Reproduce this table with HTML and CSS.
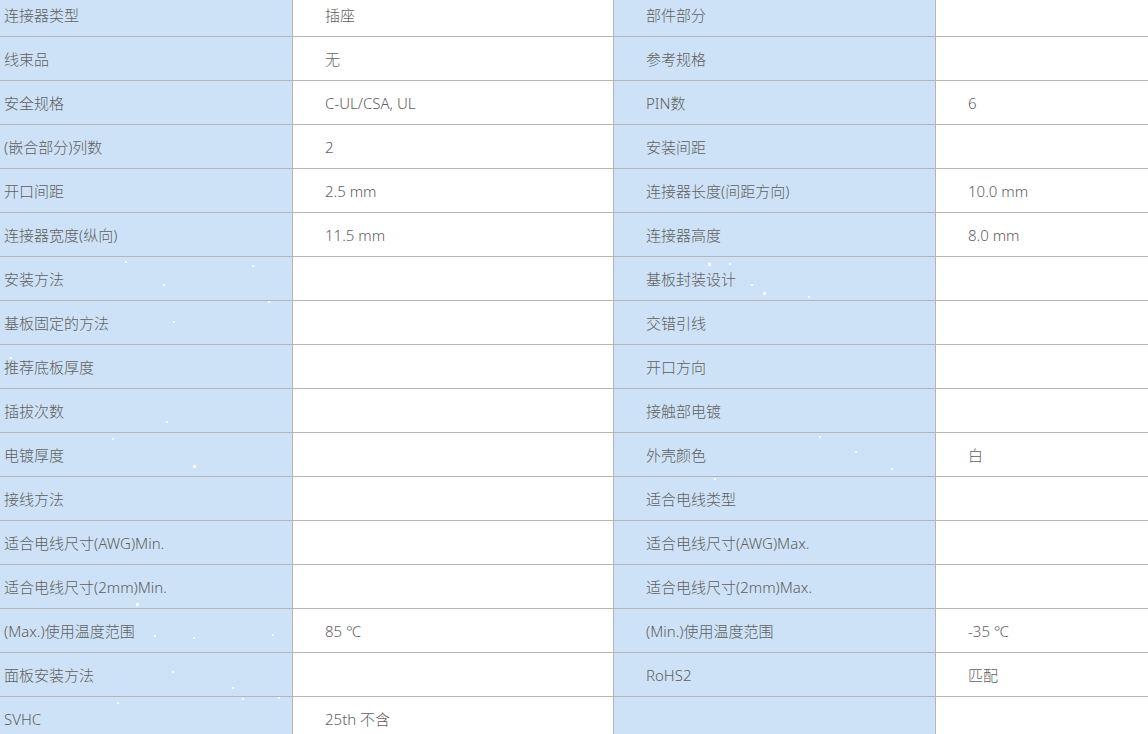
FILE: index.html
```html
<!DOCTYPE html>
<html lang="zh-CN">
<head>
<meta charset="utf-8">
<title>规格</title>
<link rel="stylesheet" href="styles.css">
</head>
<body>
<div class="spec">
  <div class="row"><div class="k">连接器类型</div><div class="v">插座</div><div class="k k2">部件部分</div><div class="v v2"></div></div>
  <div class="row"><div class="k">线束品</div><div class="v">无</div><div class="k k2">参考规格</div><div class="v v2"></div></div>
  <div class="row"><div class="k">安全规格</div><div class="v">C-UL/CSA, UL</div><div class="k k2">PIN数</div><div class="v v2">6</div></div>
  <div class="row"><div class="k">(嵌合部分)列数</div><div class="v">2</div><div class="k k2">安装间距</div><div class="v v2"></div></div>
  <div class="row"><div class="k">开口间距</div><div class="v">2.5 mm</div><div class="k k2">连接器长度(间距方向)</div><div class="v v2">10.0 mm</div></div>
  <div class="row"><div class="k">连接器宽度(纵向)</div><div class="v">11.5 mm</div><div class="k k2">连接器高度</div><div class="v v2">8.0 mm</div></div>
  <div class="row"><div class="k">安装方法</div><div class="v"></div><div class="k k2">基板封装设计</div><div class="v v2"></div></div>
  <div class="row"><div class="k">基板固定的方法</div><div class="v"></div><div class="k k2">交错引线</div><div class="v v2"></div></div>
  <div class="row"><div class="k">推荐底板厚度</div><div class="v"></div><div class="k k2">开口方向</div><div class="v v2"></div></div>
  <div class="row"><div class="k">插拔次数</div><div class="v"></div><div class="k k2">接触部电镀</div><div class="v v2"></div></div>
  <div class="row"><div class="k">电镀厚度</div><div class="v"></div><div class="k k2">外壳颜色</div><div class="v v2">白</div></div>
  <div class="row"><div class="k">接线方法</div><div class="v"></div><div class="k k2">适合电线类型</div><div class="v v2"></div></div>
  <div class="row"><div class="k">适合电线尺寸(AWG)Min.</div><div class="v"></div><div class="k k2">适合电线尺寸(AWG)Max.</div><div class="v v2"></div></div>
  <div class="row"><div class="k">适合电线尺寸(2mm)Min.</div><div class="v"></div><div class="k k2">适合电线尺寸(2mm)Max.</div><div class="v v2"></div></div>
  <div class="row"><div class="k">(Max.)使用温度范围</div><div class="v">85 ℃</div><div class="k k2">(Min.)使用温度范围</div><div class="v v2">-35 ℃</div></div>
  <div class="row"><div class="k">面板安装方法</div><div class="v"></div><div class="k k2">RoHS2</div><div class="v v2">匹配</div></div>
  <div class="row"><div class="k">SVHC</div><div class="v">25th 不含</div><div class="k k2"></div><div class="v v2"></div></div>
</div>
<div class="snow" aria-hidden="true">
  <i style="left:125px;top:261px"></i>
  <i style="left:163px;top:284px"></i>
  <i style="left:252px;top:265px"></i>
  <i style="left:268px;top:301px"></i>
  <i style="left:173px;top:321px"></i>
  <i style="left:10px;top:357px"></i>
  <i style="left:112px;top:438px"></i>
  <i style="left:193px;top:465px" class="s"></i>
  <i style="left:166px;top:421px"></i>
  <i style="left:708px;top:263px" class="s"></i>
  <i style="left:729px;top:263px"></i>
  <i style="left:751px;top:284px"></i>
  <i style="left:763px;top:292px" class="s"></i>
  <i style="left:808px;top:296px"></i>
  <i style="left:855px;top:451px"></i>
  <i style="left:891px;top:468px"></i>
  <i style="left:819px;top:436px"></i>
  <i style="left:714px;top:478px"></i>
  <i style="left:136px;top:603px" class="s"></i>
  <i style="left:154px;top:635px"></i>
  <i style="left:193px;top:637px"></i>
  <i style="left:272px;top:634px"></i>
  <i style="left:172px;top:671px"></i>
  <i style="left:232px;top:687px"></i>
  <i style="left:117px;top:702px"></i>
  <i style="left:242px;top:698px"></i>
  <i style="left:278px;top:697px"></i>
  <i style="left:1133px;top:498px"></i>
</div>
</body>
</html>
```

FILE: styles.css
```css
html, body {
  margin: 0;
  padding: 0;
  background: #ffffff;
  overflow: hidden;
}
body {
  position: relative;
  width: 1148px;
  height: 734px;
  font-family: "Noto Sans", "Noto Sans CJK SC", sans-serif;
  font-size: 15px;
  font-weight: 300;
  color: #606060;
}
.spec {
  margin-top: -7px;
  display: flex;
  flex-direction: column;
}
.row {
  display: grid;
  grid-template-columns: 293px 321px 322px 1fr;
  height: 44px;
}
.row > div {
  box-sizing: border-box;
  border-bottom: 1px solid #b5b5b5;
  display: flex;
  align-items: center;
  padding-left: 32px;
  white-space: nowrap;
}
.k {
  background: #cde2f6;
  border-right: 1px solid #b5b5b5;
}
.row > .k:first-child {
  padding-left: 4px;
}
.v {
  border-right: 1px solid #b5b5b5;
}
.k2 {
  padding-left: 34px;
}
.v2 {
  border-right: none;
}
.snow {
  position: absolute;
  inset: 0;
  pointer-events: none;
}
.snow i {
  position: absolute;
  width: 2px;
  height: 2px;
  background: rgba(255, 255, 255, 0.9);
}
.snow i.s {
  width: 3px;
  height: 3px;
}
```
